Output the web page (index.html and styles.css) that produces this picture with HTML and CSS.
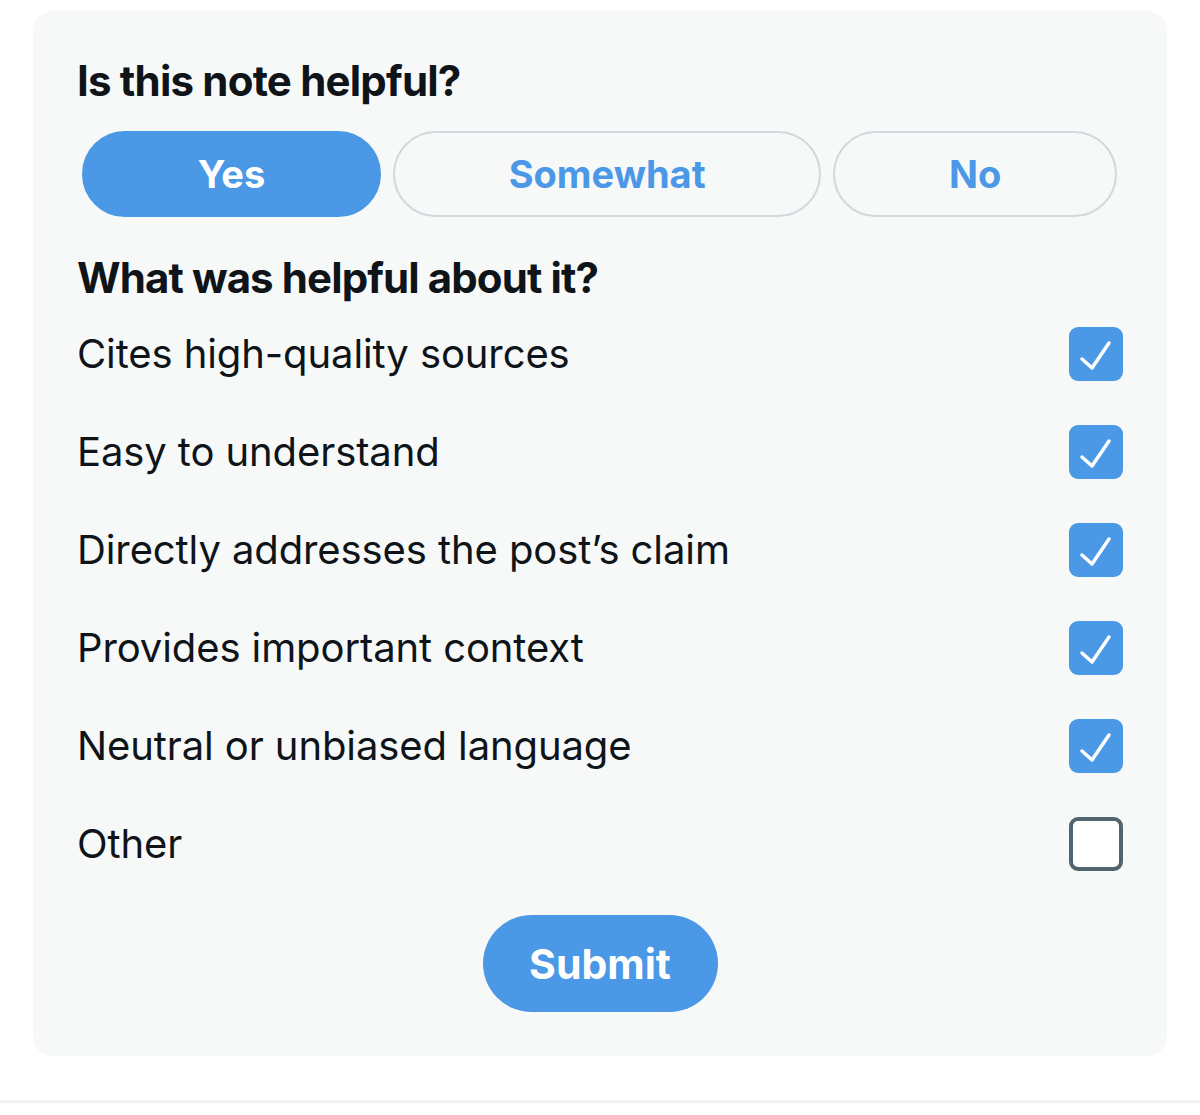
FILE: index.html
```html
<!DOCTYPE html>
<html>
<head>
<meta charset="utf-8">
<link rel="stylesheet" href="styles.css">
</head>
<body>
<div class="page">
  <div class="card">
    <h1 class="title">Is this note helpful?</h1>
    <div class="choices">
      <button class="choice choice-active">Yes</button>
      <button class="choice">Somewhat</button>
      <button class="choice">No</button>
    </div>
    <h2 class="subtitle">What was helpful about it?</h2>
    <ul class="options">
      <li class="option"><span class="label">Cites high-quality sources</span><span class="box checked"><svg viewBox="0 0 54 54"><path d="M13 32 L23 41 L40 16"/></svg></span></li>
      <li class="option"><span class="label">Easy to understand</span><span class="box checked"><svg viewBox="0 0 54 54"><path d="M13 32 L23 41 L40 16"/></svg></span></li>
      <li class="option"><span class="label">Directly addresses the post’s claim</span><span class="box checked"><svg viewBox="0 0 54 54"><path d="M13 32 L23 41 L40 16"/></svg></span></li>
      <li class="option"><span class="label">Provides important context</span><span class="box checked"><svg viewBox="0 0 54 54"><path d="M13 32 L23 41 L40 16"/></svg></span></li>
      <li class="option"><span class="label">Neutral or unbiased language</span><span class="box checked"><svg viewBox="0 0 54 54"><path d="M13 32 L23 41 L40 16"/></svg></span></li>
      <li class="option"><span class="label">Other</span><span class="box"></span></li>
    </ul>
    <div class="actions">
      <button class="submit">Submit</button>
    </div>
  </div>
  <div class="divider"></div>
</div>
</body>
</html>
```
FILE: styles.css
```css
* { box-sizing: border-box; }
html, body { margin: 0; padding: 0; background: #ffffff; }
body {
  font-family: Inter, "Noto Sans", "Liberation Sans", sans-serif;
  color: #0f1419;
}
.page {
  padding-top: 11px;
}
.card {
  margin: 0 33px;
  background: #f7f9f9;
  border-radius: 20px;
  padding: 46px 44px 44px 44px;
  display: flex;
  flex-direction: column;
}
.title {
  margin: 0;
  font-size: 42px;
  line-height: 48px;
  font-weight: 700;
  letter-spacing: -0.8px;
}
.choices {
  display: flex;
  gap: 12px;
  margin: 26px 6px 0 5px;
}
.choice {
  flex: 1 1 auto;
  height: 86px;
  border-radius: 43px;
  border: 2px solid #cfd9de;
  background: #f7f9f9;
  color: #4a98e6;
  font-family: inherit;
  font-size: 38px;
  font-weight: 700;
  padding: 0 20px;
}
.choice-active {
  background: #4a98e6;
  border-color: #4a98e6;
  color: #ffffff;
}
.subtitle {
  margin: 38px 0 0;
  font-size: 42px;
  line-height: 46px;
  font-weight: 700;
  letter-spacing: -0.9px;
}
.options {
  list-style: none;
  margin: 4px 0 0;
  padding: 0;
}
.option {
  height: 98px;
  display: flex;
  align-items: center;
  justify-content: space-between;
}
.label {
  font-size: 40px;
  line-height: 46px;
  letter-spacing: -0.1px;
}
.box {
  width: 54px;
  height: 54px;
  border-radius: 9px;
  border: 4px solid #536471;
  background: #ffffff;
  display: flex;
  flex: none;
}
.box.checked {
  background: #4a98e6;
  border: none;
}
.box svg {
  width: 54px;
  height: 54px;
}
.box path {
  fill: none;
  stroke: #ffffff;
  stroke-width: 3.5;
  stroke-linecap: round;
  stroke-linejoin: round;
}
.actions {
  display: flex;
  justify-content: center;
  margin-top: 22px;
}
.submit {
  width: 235px;
  height: 97px;
  border-radius: 49px;
  border: none;
  background: #4a98e6;
  color: #ffffff;
  font-family: inherit;
  font-size: 41px;
  font-weight: 700;
}
.divider {
  margin-top: 44px;
  height: 3px;
  background: #eff3f4;
}
```
